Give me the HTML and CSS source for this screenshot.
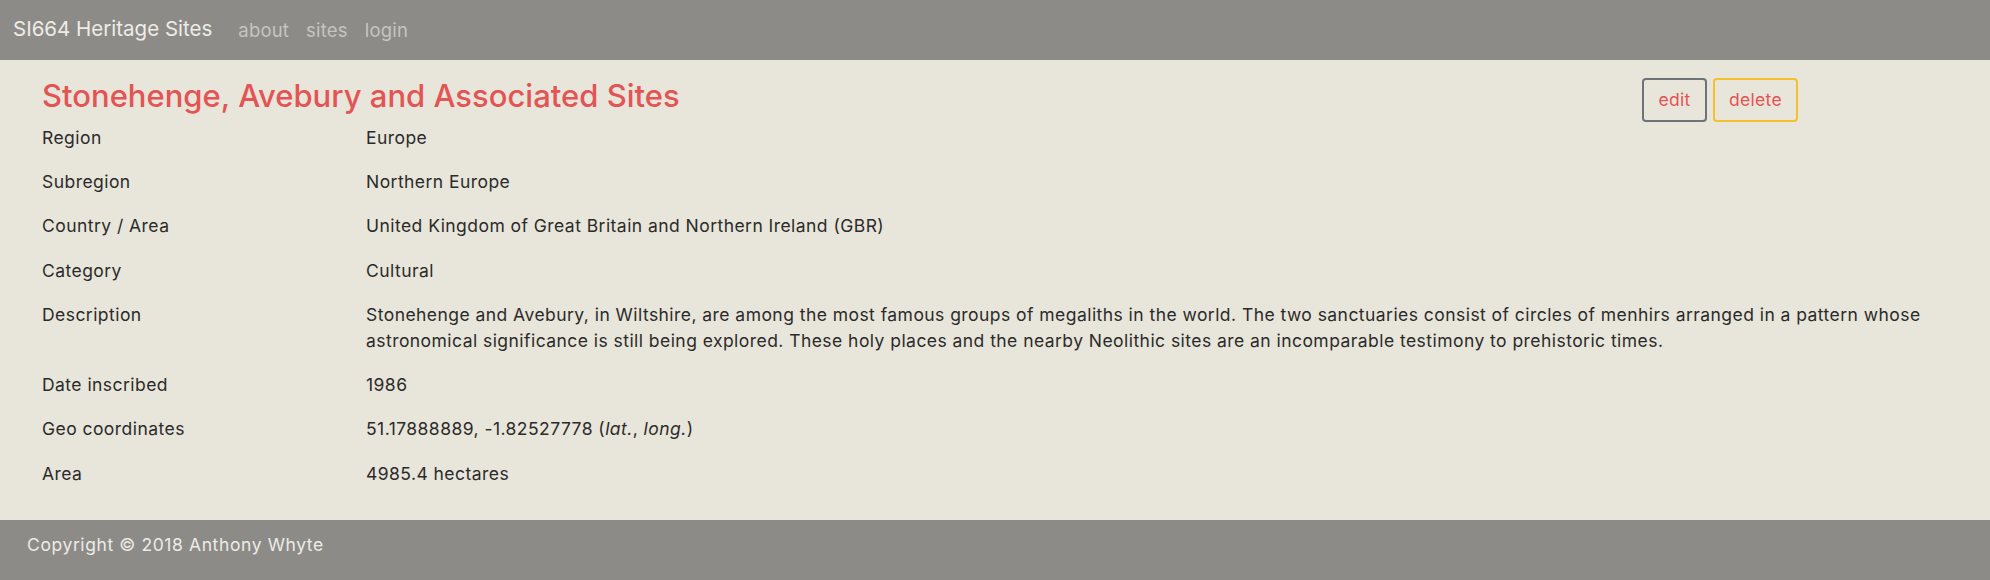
FILE: index.html
```html
<!DOCTYPE html>
<html lang="en">
<head>
<meta charset="utf-8">
<title>SI664 Heritage Sites</title>
<link rel="stylesheet" href="styles.css">
</head>
<body>
<nav class="navbar">
  <a class="brand" href="#">SI664 Heritage Sites</a>
  <ul class="nav-links">
    <li><a href="#">about</a></li>
    <li><a href="#">sites</a></li>
    <li><a href="#">login</a></li>
  </ul>
</nav>
<main class="content">
  <header class="site-header">
    <h1 class="site-title">Stonehenge, Avebury and Associated Sites</h1>
    <div class="actions">
      <a class="btn btn-edit" href="#">edit</a>
      <a class="btn btn-delete" href="#">delete</a>
    </div>
  </header>
  <table class="details">
    <colgroup><col class="label-col"><col></colgroup>
    <tbody>
      <tr><td>Region</td><td>Europe</td></tr>
      <tr><td>Subregion</td><td>Northern Europe</td></tr>
      <tr><td>Country / Area</td><td>United Kingdom of Great Britain and Northern Ireland (GBR)</td></tr>
      <tr><td>Category</td><td>Cultural</td></tr>
      <tr><td>Description</td><td>Stonehenge and Avebury, in Wiltshire, are among the most famous groups of megaliths in the world. The two sanctuaries consist of circles of menhirs arranged in a pattern whose astronomical significance is still being explored. These holy places and the nearby Neolithic sites are an incomparable testimony to prehistoric times.</td></tr>
      <tr><td>Date inscribed</td><td>1986</td></tr>
      <tr><td>Geo coordinates</td><td>51.17888889, -1.82527778 (<em>lat.</em>, <em>long.</em>)</td></tr>
      <tr><td>Area</td><td>4985.4 hectares</td></tr>
    </tbody>
  </table>
</main>
<footer class="footer">
  <p>Copyright © 2018 Anthony Whyte</p>
</footer>
</body>
</html>
```

FILE: styles.css
```css
* { box-sizing: border-box; }
html, body {
  margin: 0;
  padding: 0;
}
body {
  background: #e8e5da;
  color: #2b2b2b;
  font-family: "Inter", "Liberation Sans", sans-serif;
  font-size: 17.5px;
  letter-spacing: 0.45px;
  line-height: 25.4px;
}
a { text-decoration: none; }

.navbar {
  height: 60px;
  background: #8d8b88;
  display: flex;
  align-items: center;
  padding: 0 13px;
}
.brand {
  color: #eeece6;
  font-size: 20.5px;
  letter-spacing: 0;
  line-height: 30px;
  margin-right: 26px;
  margin-top: -2px;
}
.nav-links {
  list-style: none;
  margin: 0;
  padding: 0;
  display: flex;
  gap: 17px;
}
.nav-links a {
  color: #c6c4bf;
  font-size: 18.5px;
  letter-spacing: 0.2px;
  line-height: 30px;
}

.content {
  padding: 15px 30px 0 42px;
}
.site-header {
  display: grid;
  grid-template-columns: 1fr 318px;
}
.site-title {
  margin: 0;
  padding-top: 2px;
  color: #e35454;
  font-size: 31px;
  font-weight: 500;
  letter-spacing: 0;
  line-height: 38px;
}
.actions {
  display: flex;
  gap: 6px;
  height: 40px;
  padding-top: 3px;
  align-items: flex-start;
}
.btn {
  display: inline-flex;
  align-items: center;
  justify-content: center;
  flex-shrink: 0;
  height: 44px;
  border: 2px solid;
  border-radius: 4px;
  color: #e35454;
  font-size: 17.5px;
  letter-spacing: 0.3px;
  padding: 0 10px;
}
.btn-edit { border-color: #6c747a; width: 65px; }
.btn-delete { border-color: #f5c02c; width: 85px; }

.details {
  width: 100%;
  border-collapse: collapse;
  table-layout: fixed;
  margin-bottom: 24px;
}
.label-col { width: 324px; }
.details td {
  padding: 9.5px 0;
  vertical-align: top;
}

.footer {
  background: #8d8b88;
  color: #ecebe5;
  min-height: 80px;
  padding: 12px 27px 20px;
}
.footer p {
  margin: 0;
  font-size: 17.5px;
  letter-spacing: 0.6px;
  line-height: 25px;
}
```
